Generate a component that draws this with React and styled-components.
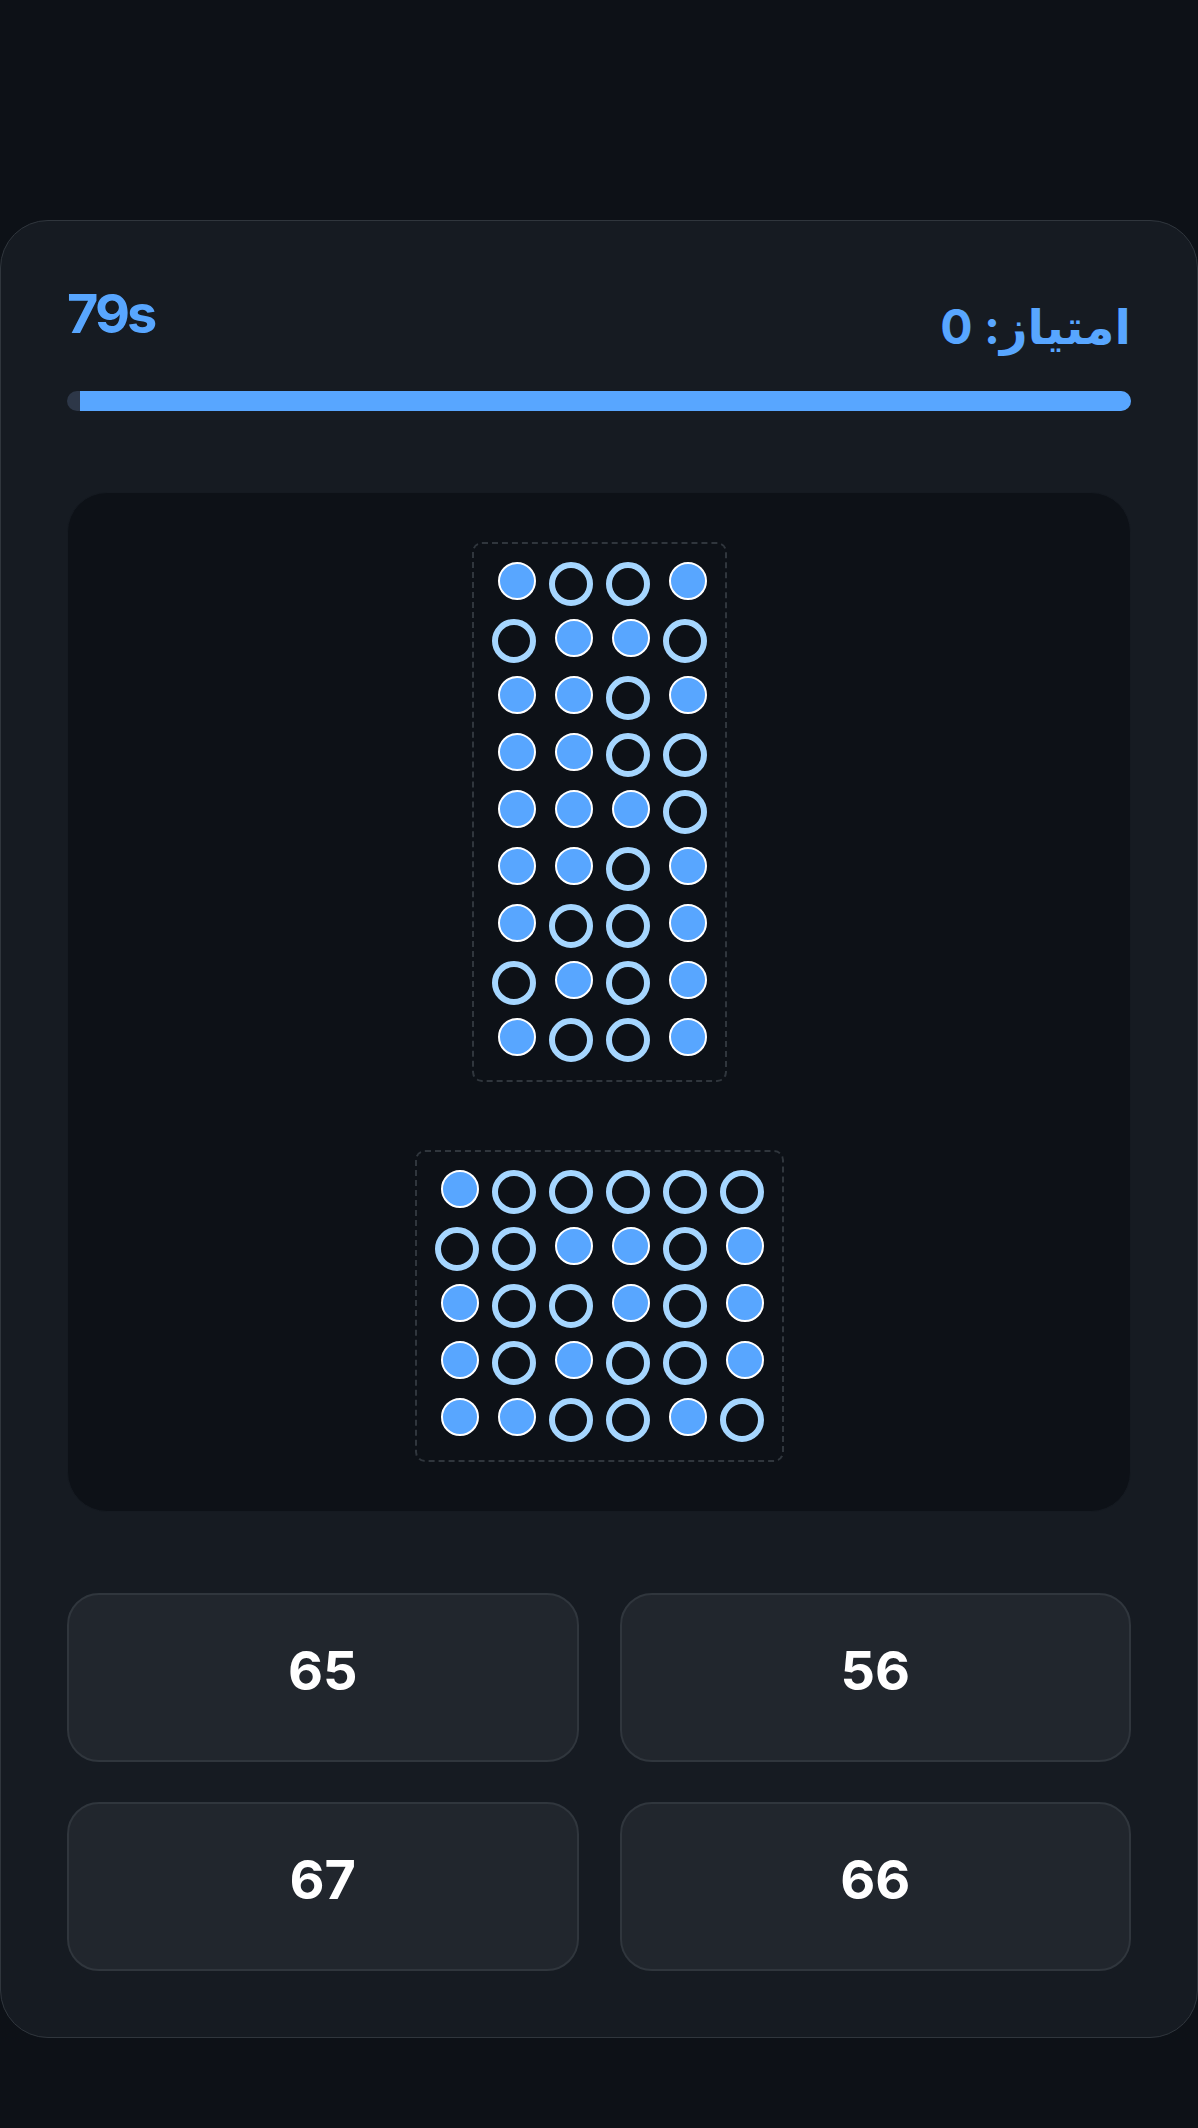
import React from 'react';
import styled, { createGlobalStyle } from 'styled-components';

const GlobalStyle = createGlobalStyle`
  * {
    box-sizing: border-box;
  }

  body {
    margin: 0;
    background: #0d1117;
    font-family: Inter, "DejaVu Sans", sans-serif;
  }
`;

const Page = styled.div`
  padding: 220px 0 91px;
`;

const GameCard = styled.div`
  direction: rtl;
  width: 100%;
  background: #161b22;
  border: 1px solid #30363d;
  border-radius: 48px;
  padding: 66px;
`;

const Header = styled.div`
  display: flex;
  justify-content: space-between;
  align-items: flex-start;
  height: 54px;
`;

const Score = styled.div`
  color: #58a6ff;
  font-size: 48px;
  font-weight: 700;
  line-height: 54px;
  padding-top: 13px;
`;

const Timer = styled.div`
  direction: ltr;
  color: #58a6ff;
  font-size: 54px;
  font-weight: 700;
  line-height: 54px;
  letter-spacing: -3px;
`;

const ProgressTrack = styled.div`
  height: 20px;
  margin: 50px 0 81px;
  background: #2d3748;
  border-radius: 10px;
  overflow: hidden;
`;

const ProgressFill = styled.div`
  height: 100%;
  background: #58a6ff;
`;

const Board = styled.div`
  display: flex;
  flex-direction: column;
  align-items: center;
  gap: 68px;
  padding: 49px;
  background: #0d1117;
  border: 1px solid #151a21;
  border-radius: 40px;
  margin-bottom: 81px;
`;

const DotGrid = styled.div`
  direction: ltr;
  display: grid;
  grid-template-columns: repeat(${p => p.$cols}, 44px);
  grid-auto-rows: 44px;
  gap: 13px;
  justify-items: end;
  align-items: start;
  padding: 18px;
  border: 2px dashed #30363d;
  border-radius: 10px;
`;

const Dot = styled.span`
  display: block;
  border-radius: 50%;
  width: ${p => (p.$filled ? 38 : 44)}px;
  height: ${p => (p.$filled ? 38 : 44)}px;
  background: ${p => (p.$filled ? '#58a6ff' : 'transparent')};
  border: ${p => (p.$filled ? '2px solid #ffffff' : '6px solid #a5d6ff')};
`;

const Answers = styled.div`
  display: grid;
  grid-template-columns: 1fr 1fr;
  column-gap: 41px;
  row-gap: 40px;
`;

const AnswerButton = styled.button`
  height: 169px;
  padding: 0 0 14px;
  background: #21262d;
  border: 2px solid #30363d;
  border-radius: 32px;
  color: #ffffff;
  font-family: Inter, sans-serif;
  font-size: 54px;
  font-weight: 700;
  cursor: pointer;
`;

// 1 = filled dot, 0 = empty ring
const upperRows = [
  '1001',
  '0110',
  '1101',
  '1100',
  '1110',
  '1101',
  '1001',
  '0101',
  '1001',
];

const lowerRows = [
  '100000',
  '001101',
  '100101',
  '101001',
  '110010',
];

const DotPattern = ({ rows }) => (
  <DotGrid $cols={rows[0].length}>
    {rows.join('').split('').map((c, i) => (
      <Dot key={i} $filled={c === '1'} />
    ))}
  </DotGrid>
);

const options = [56, 65, 66, 67];

const App = () => {
  const timeLeft = 79;
  const totalTime = 80;
  const score = 0;

  return (
    <Page>
      <GlobalStyle />
      <GameCard>
        <Header>
          <Score>امتیاز: {score}</Score>
          <Timer>{timeLeft}s</Timer>
        </Header>

        <ProgressTrack>
          <ProgressFill style={{ width: `${(timeLeft / totalTime) * 100}%` }} />
        </ProgressTrack>

        <Board>
          <DotPattern rows={upperRows} />
          <DotPattern rows={lowerRows} />
        </Board>

        <Answers>
          {options.map(n => (
            <AnswerButton key={n}>{n}</AnswerButton>
          ))}
        </Answers>
      </GameCard>
    </Page>
  );
};

export default App;
